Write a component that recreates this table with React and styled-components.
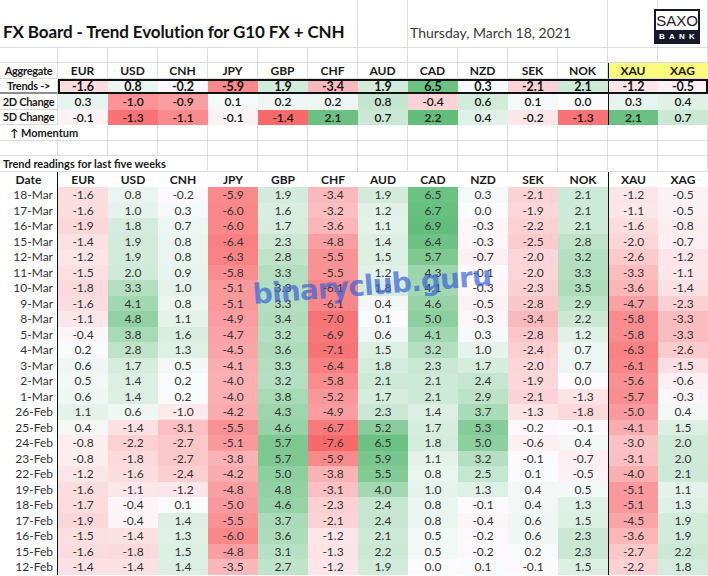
import React from "react";
import styled, { createGlobalStyle } from "styled-components";

const GlobalStyle = createGlobalStyle`
  html, body {
    margin: 0;
    padding: 0;
    background: #fff;
  }
  body {
    font-family: Lato, "Open Sans", "DejaVu Sans", sans-serif;
    color: #222;
  }
`;

const COLS = "58px repeat(13, 50px)";
const GRID = "#dcdcdc";

const CURRENCIES = ["EUR", "USD", "CNH", "JPY", "GBP", "CHF", "AUD", "CAD", "NZD", "SEK", "NOK", "XAU", "XAG"];

const trends = [-1.6, 0.8, -0.2, -5.9, 1.9, -3.4, 1.9, 6.5, 0.3, -2.1, 2.1, -1.2, -0.5];
const change2d = [0.3, -1.0, -0.9, 0.1, 0.2, 0.2, 0.8, -0.4, 0.6, 0.1, 0.0, 0.3, 0.4];
const change5d = [-0.1, -1.3, -1.1, -0.1, -1.4, 2.1, 0.7, 2.2, 0.4, -0.2, -1.3, 2.1, 0.7];

const readings = [
  ["18-Mar", [-1.6, 0.8, -0.2, -5.9, 1.9, -3.4, 1.9, 6.5, 0.3, -2.1, 2.1, -1.2, -0.5]],
  ["17-Mar", [-1.6, 1.0, 0.3, -6.0, 1.6, -3.2, 1.2, 6.7, 0.0, -1.9, 2.1, -1.1, -0.5]],
  ["16-Mar", [-1.9, 1.8, 0.7, -6.0, 1.7, -3.6, 1.1, 6.9, -0.3, -2.2, 2.1, -1.6, -0.8]],
  ["15-Mar", [-1.4, 1.9, 0.8, -6.4, 2.3, -4.8, 1.4, 6.4, -0.3, -2.5, 2.8, -2.0, -0.7]],
  ["12-Mar", [-1.2, 1.9, 0.8, -6.3, 2.8, -5.5, 1.5, 5.7, -0.7, -2.0, 3.2, -2.6, -1.2]],
  ["11-Mar", [-1.5, 2.0, 0.9, -5.8, 3.3, -5.5, 1.2, 4.3, -0.1, -2.0, 3.3, -3.3, -1.1]],
  ["10-Mar", [-1.8, 3.3, 1.0, -5.1, 3.3, -6.1, 1.8, 4.1, -0.3, -2.3, 3.5, -3.6, -1.4]],
  ["9-Mar", [-1.6, 4.1, 0.8, -5.1, 3.3, -6.1, 0.4, 4.6, -0.5, -2.8, 2.9, -4.7, -2.3]],
  ["8-Mar", [-1.1, 4.8, 1.1, -4.9, 3.4, -7.0, 0.1, 5.0, -0.3, -3.4, 2.2, -5.8, -3.3]],
  ["5-Mar", [-0.4, 3.8, 1.6, -4.7, 3.2, -6.9, 0.6, 4.1, 0.3, -2.8, 1.2, -5.8, -3.3]],
  ["4-Mar", [0.2, 2.8, 1.3, -4.5, 3.6, -7.1, 1.5, 3.2, 1.0, -2.4, 0.7, -6.3, -2.6]],
  ["3-Mar", [0.6, 1.7, 0.5, -4.1, 3.3, -6.4, 1.8, 2.3, 1.7, -2.0, 0.7, -6.1, -1.5]],
  ["2-Mar", [0.5, 1.4, 0.2, -4.0, 3.2, -5.8, 2.1, 2.1, 2.4, -1.9, 0.0, -5.6, -0.6]],
  ["1-Mar", [0.6, 1.4, 0.2, -4.0, 3.8, -5.2, 1.7, 2.1, 2.9, -2.1, -1.3, -5.7, -0.3]],
  ["26-Feb", [1.1, 0.6, -1.0, -4.2, 4.3, -4.9, 2.3, 1.4, 3.7, -1.3, -1.8, -5.0, 0.4]],
  ["25-Feb", [0.4, -1.4, -3.1, -5.5, 4.6, -6.7, 5.2, 1.7, 5.3, -0.2, -0.1, -4.1, 1.5]],
  ["24-Feb", [-0.8, -2.2, -2.7, -5.1, 5.7, -7.6, 6.5, 1.8, 5.0, -0.6, 0.4, -3.0, 2.0]],
  ["23-Feb", [-0.8, -1.8, -2.7, -3.8, 5.7, -5.9, 5.9, 1.1, 3.2, -0.1, -0.7, -3.1, 2.0]],
  ["22-Feb", [-1.2, -1.6, -2.4, -4.2, 5.0, -3.8, 5.5, 0.8, 2.5, 0.1, -0.5, -4.0, 2.1]],
  ["19-Feb", [-1.6, -1.1, -1.2, -4.8, 4.8, -3.1, 4.0, 1.0, 1.3, 0.4, 0.5, -5.1, 1.1]],
  ["18-Feb", [-1.7, -0.4, 0.1, -5.0, 4.6, -2.3, 2.4, 0.8, -0.1, 0.4, 1.3, -5.1, 1.3]],
  ["17-Feb", [-1.9, -0.4, 1.4, -5.5, 3.7, -2.1, 2.4, 0.8, -0.4, 0.6, 1.5, -4.5, 1.9]],
  ["16-Feb", [-1.5, -1.4, 1.3, -6.0, 3.6, -1.2, 2.1, 0.5, -0.2, 0.6, 2.3, -3.6, 1.9]],
  ["15-Feb", [-1.6, -1.8, 1.5, -4.8, 3.1, -1.3, 2.2, 0.5, -0.2, 0.2, 2.3, -2.7, 2.2]],
  ["12-Feb", [-1.4, -1.4, 1.4, -3.5, 2.7, -1.2, 1.9, 0.0, 0.1, -0.1, 1.5, -2.2, 1.8]],
];

// excel style 3 colour scale, white in the middle at 0
const WHITE = [252, 252, 255];
const RED = [248, 105, 107];
const GREEN = [99, 190, 123];

const heat = (v, min, max) => {
  const target = v < 0 ? RED : GREEN;
  const t = v < 0 ? Math.min(v / min, 1) : Math.min(v / max, 1);
  const c = WHITE.map((w, i) => Math.round(w + (target[i] - w) * t));
  return `rgb(${c.join(",")})`;
};

const mainHeat = (v) => heat(v, -7.6, 6.9);
const changeHeat = (v) => heat(v, -1.4, 2.2);

const Page = styled.div`
  position: relative;
  width: 708px;
  height: 576px;
  overflow: hidden;
  background: #fff;
`;

const Row = styled.div`
  display: grid;
  grid-template-columns: ${COLS};
  height: ${(p) => p.$h || 15.5}px;
`;

const Blank = styled.div`
  box-sizing: border-box;
  grid-column: span ${(p) => p.$span || 1};
  border-right: 1px solid ${GRID};
  border-bottom: 1px solid ${GRID};
`;

const TitleCell = styled(Blank)`
  display: flex;
  align-items: flex-end;
  padding: 0 0 5px 3px;
  font-size: 17px;
  font-weight: 700;
  letter-spacing: -0.1px;
  color: #111;
  white-space: nowrap;
`;

const DateText = styled(Blank)`
  display: flex;
  align-items: flex-end;
  padding: 0 0 6px 2px;
  font-size: 14px;
  color: #3a3a32;
  white-space: nowrap;
`;

const Label = styled(Blank)`
  display: flex;
  align-items: center;
  justify-content: ${(p) => (p.$left ? "flex-start" : "center")};
  padding-left: ${(p) => p.$indent || 0}px;
  font-size: 11px;
  font-weight: 700;
  letter-spacing: ${(p) => (p.$left ? 0 : -0.3)}px;
  color: #1a1a1a;
  white-space: nowrap;
  border-bottom: ${(p) => (p.$under ? "2px solid #8c8c8c" : `1px solid ${GRID}`)};
`;

const HeadCell = styled(Label)`
  font-size: 12px;
  letter-spacing: 0;
  background: ${(p) => (p.$gold ? "#fbfb7e" : "#fff")};
  border-right-color: ${(p) => (p.$gold ? "transparent" : GRID)};
  border-left: ${(p) => (p.$sep ? "1px solid #111" : "none")};
`;

const Value = styled.div`
  box-sizing: border-box;
  display: flex;
  align-items: center;
  justify-content: center;
  background: ${(p) => p.$bg};
  border-left: ${(p) => (p.$sep ? "1px solid #111" : "none")};
  font-size: ${(p) => (p.$strong ? 12.5 : 12)}px;
  font-weight: ${(p) => (p.$strong ? 700 : p.$semi ? 600 : 400)};
  color: ${(p) => (p.$strong || p.$semi ? "#141414" : "#333")};
  white-space: nowrap;
`;

const TrendsBox = styled.div`
  position: relative;
  grid-column: span 13;
  display: grid;
  grid-template-columns: repeat(13, 50px);

  &::after {
    content: "";
    position: absolute;
    inset: 0;
    border: 2px solid #111;
    pointer-events: none;
  }
`;

const ColHead = styled.div`
  box-sizing: border-box;
  display: flex;
  align-items: center;
  justify-content: center;
  background: #fff;
  border-bottom: 2px solid #111;
  border-left: ${(p) => (p.$sep ? "1px solid #111" : "none")};
  border-right: ${(p) => (p.$first ? "1px solid #111" : "none")};
  font-size: 12px;
  font-weight: 700;
  color: #1a1a1a;
`;

const DateCell = styled.div`
  box-sizing: border-box;
  display: flex;
  align-items: center;
  justify-content: flex-end;
  padding-right: 4px;
  background: #fff;
  border-right: 1px solid #111;
  font-size: 12px;
  color: #333;
  white-space: nowrap;
`;

const Logo = styled.div`
  position: absolute;
  top: 9px;
  left: 654px;
  width: 46px;
  height: 35px;
  display: flex;
  flex-direction: column;
  box-sizing: border-box;
  border: 2px solid #16192a;
  background: #16192a;
`;

const LogoTop = styled.div`
  flex: 0 0 19px;
  display: flex;
  align-items: center;
  justify-content: center;
  background: #fff;
  font-family: "Liberation Sans", Arial, sans-serif;
  font-size: 15px;
  font-weight: 500;
  color: #16192a;
`;

const LogoBottom = styled.div`
  flex: 1;
  display: flex;
  align-items: center;
  justify-content: center;
  padding-left: 4px;
  font-family: "Liberation Sans", Arial, sans-serif;
  font-size: 8px;
  font-weight: 700;
  letter-spacing: 4.2px;
  color: #fff;
`;

const Watermark = styled.div`
  position: absolute;
  left: 254px;
  top: 278px;
  font-family: "DejaVu Sans", Verdana, sans-serif;
  font-size: 28px;
  font-weight: 700;
  letter-spacing: -0.8px;
  color: rgba(62, 102, 216, 0.72);
  transform: rotate(-4.5deg);
  transform-origin: left bottom;
  white-space: nowrap;
  pointer-events: none;
`;

const fmt = (v) => v.toFixed(1);

const blanks = (n) => Array.from({ length: n }, (_, i) => <Blank key={i} />);

const isMetal = (i) => i === 11;

const App = () => {
  return (
    <>
      <GlobalStyle />
      <Page>
        <Row $h={47.5}>
          <TitleCell $span={7}>FX Board - Trend Evolution for G10 FX + CNH</TitleCell>
          <Blank />
          <DateText $span={4}>Thursday, March 18, 2021</DateText>
          <Blank />
          <Blank />
        </Row>

        <Row>{blanks(14)}</Row>

        <Row>
          <Label>Aggregate</Label>
          {CURRENCIES.map((c, i) => (
            <HeadCell key={c} $gold={i >= 11} $sep={isMetal(i)}>
              {c}
            </HeadCell>
          ))}
        </Row>

        <Row>
          <Label $under>Trends -&gt;</Label>
          <TrendsBox>
            {trends.map((v, i) => (
              <Value key={i} $bg={mainHeat(v)} $sep={isMetal(i)} $strong>
                {fmt(v)}
              </Value>
            ))}
          </TrendsBox>
        </Row>

        <Row>
          <Label>2D Change</Label>
          {change2d.map((v, i) => (
            <Value key={i} $bg={changeHeat(v)} $sep={isMetal(i)} $semi>
              {fmt(v)}
            </Value>
          ))}
        </Row>

        <Row>
          <Label>5D Change</Label>
          {change5d.map((v, i) => (
            <Value key={i} $bg={changeHeat(v)} $sep={isMetal(i)} $semi>
              {fmt(v)}
            </Value>
          ))}
        </Row>

        <Row>
          <Label $span={2} $left $indent={10}>↑ Momentum</Label>
          {blanks(12)}
        </Row>

        <Row>{blanks(14)}</Row>

        <Row>
          <Label $span={4} $left $indent={3}>Trend readings for last five weeks</Label>
          {blanks(10)}
        </Row>

        <Row>
          <ColHead $first>Date</ColHead>
          {CURRENCIES.map((c, i) => (
            <ColHead key={c} $sep={isMetal(i)}>
              {c}
            </ColHead>
          ))}
        </Row>

        {readings.map(([date, values]) => (
          <Row key={date}>
            <DateCell>{date}</DateCell>
            {values.map((v, i) => (
              <Value key={i} $bg={mainHeat(v)} $sep={isMetal(i)}>
                {fmt(v)}
              </Value>
            ))}
          </Row>
        ))}

        <Logo>
          <LogoTop>SAXO</LogoTop>
          <LogoBottom>BANK</LogoBottom>
        </Logo>
        <Watermark>binaryclub.guru</Watermark>
      </Page>
    </>
  );
};

export default App;
